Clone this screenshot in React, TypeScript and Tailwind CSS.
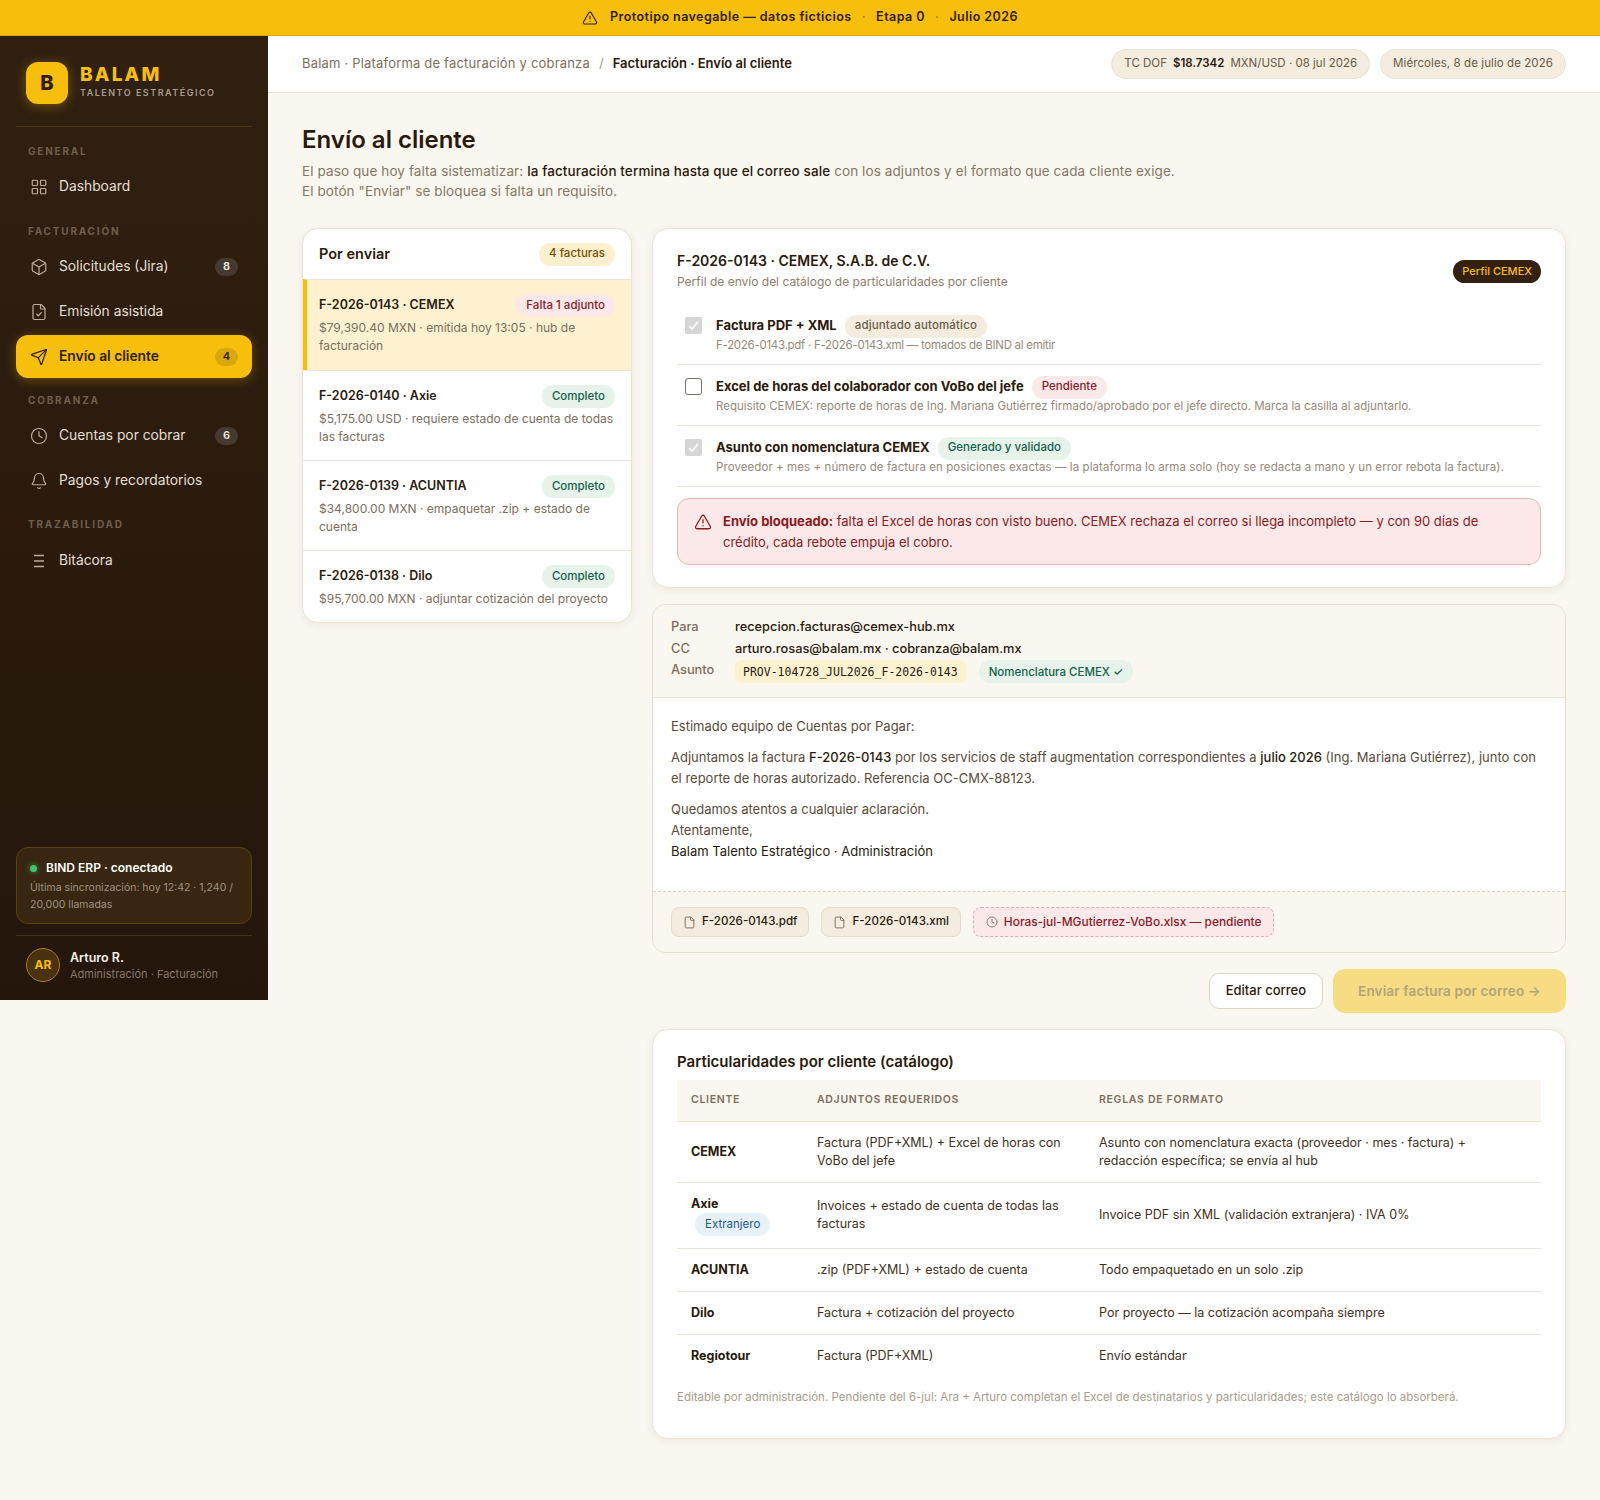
import { Bell, Box, Clock, File, FileCheck, LayoutGrid, Send, TriangleAlert } from 'lucide-react';

const sans = "font-['Inter','Liberation_Sans',sans-serif]";

const toneClass = {
  amber: 'bg-[#fdf0cf] text-[#7a4a00]',
  red: 'bg-[#fbe8e8] text-[#8b1a2a]',
  green: 'bg-[#e6f2ea] text-[#14624a]',
  blue: 'bg-[#e6f1f8] text-[#1f5a8c]',
  neutral: 'bg-[#f3ecdf] text-[#6b5b47]',
};

type Tone = keyof typeof toneClass;

const Badge = ({ tone, children, className = '' }: { tone: Tone; children: React.ReactNode; className?: string }) => (
  <span className={`inline-flex h-[23px] items-center whitespace-nowrap rounded-full px-[10px] text-[11.5px] font-medium ${toneClass[tone]} ${className}`}>
    {children}
  </span>
);

const NavLabel = ({ children }: { children: React.ReactNode }) => (
  <div className="px-3 pb-[5px] text-[10px] font-bold uppercase leading-[15px] tracking-[1.8px] text-[#6f5f4c]">{children}</div>
);

const NavItem = ({ icon, label, count, active }: { icon: React.ReactNode; label: string; count?: number; active?: boolean }) => (
  <div
    className={`flex items-center gap-[11px] rounded-[12px] px-[14px] text-[13.8px] ${
      active
        ? 'my-px h-[43px] bg-[#f7bf0c] font-semibold text-[#2f1e10] shadow-[0_2px_12px_rgba(247,191,12,0.3)]'
        : 'h-[45px] text-[#e6dfd2]'
    }`}
  >
    <span className={`flex w-[18px] justify-center ${active ? 'text-[#2f1e10]' : 'text-[#b9ad9c]'}`}>{icon}</span>
    <span className="flex-1 whitespace-nowrap">{label}</span>
    {count !== undefined && (
      <span
        className={`flex h-[18px] w-[23px] items-center justify-center rounded-full text-[11px] font-semibold ${
          active ? 'bg-[#d9a80c] text-[#3a2610]' : 'bg-[#463a30] text-[#f0eadf]'
        }`}
      >
        {count}
      </span>
    )}
  </div>
);

const Sidebar = () => (
  <aside className="flex h-[964px] w-[268px] shrink-0 flex-col bg-gradient-to-b from-[#302010] to-[#24160b] px-4 pt-[26px]">
    <div className="flex items-center gap-3 border-b border-[#4a3510] pb-[22px] pl-[10px]">
      <div className="flex h-[42px] w-[42px] items-center justify-center rounded-[12px] bg-[#f7bf0c] text-[20px] font-extrabold text-[#2f1e10] shadow-[0_2px_12px_rgba(247,191,12,0.35)]">
        B
      </div>
      <div className="mb-[2px]">
        <div className="text-[19px] font-extrabold leading-[22px] tracking-[2.2px] text-[#f7bf0c]">BALAM</div>
        <div className="whitespace-nowrap text-[9px] font-semibold leading-[14px] tracking-[1.5px] text-[#a89c8b]">TALENTO ESTRATÉGICO</div>
      </div>
    </div>
    <div className="mt-[17px] flex-1">
      <NavLabel>General</NavLabel>
      <NavItem icon={<LayoutGrid size={18} strokeWidth={1.6} />} label="Dashboard" />
      <div className="mt-[15px]" />
      <NavLabel>Facturación</NavLabel>
      <NavItem icon={<Box size={18} strokeWidth={1.6} />} label="Solicitudes (Jira)" count={8} />
      <NavItem icon={<FileCheck size={18} strokeWidth={1.6} />} label="Emisión asistida" />
      <NavItem icon={<Send size={18} strokeWidth={1.6} />} label="Envío al cliente" count={4} active />
      <div className="mt-[15px]" />
      <NavLabel>Cobranza</NavLabel>
      <NavItem icon={<Clock size={18} strokeWidth={1.6} />} label="Cuentas por cobrar" count={6} />
      <NavItem icon={<Bell size={18} strokeWidth={1.6} />} label="Pagos y recordatorios" />
      <div className="mt-[14px]" />
      <NavLabel>Trazabilidad</NavLabel>
      <div className="pt-px">
        <NavItem
          icon={
            <svg width="12" height="14" viewBox="0 0 12 14" fill="none" stroke="currentColor" strokeWidth="1.3">
              <path d="M1 1.5h10M1 7h10M1 12.5h10" />
            </svg>
          }
          label="Bitácora"
        />
      </div>
    </div>
    <div className="rounded-[12px] border border-[#5a4210] bg-[#382610] px-[13px] pb-[10px] pt-[11px]">
      <div className="flex items-center gap-[9px] text-[12px] font-semibold leading-[18px] text-white">
        <span className="h-[7px] w-[7px] rounded-full bg-[#3ec46d] shadow-[0_0_6px_rgba(62,196,109,0.7)]" />
        BIND ERP · conectado
      </div>
      <div className="mt-[2px] text-[10.5px] leading-[17px] text-[#a09381]">Última sincronización: hoy 12:42 · 1,240 / 20,000 llamadas</div>
    </div>
    <div className="mt-[11px] flex items-center gap-[10px] border-t border-[#43321d] pb-[18px] pl-[10px] pt-[12px]">
      <div className="flex h-[34px] w-[34px] items-center justify-center rounded-full border border-[#a97c14] bg-[#4a3210] text-[12px] font-bold text-[#f7bf0c]">
        AR
      </div>
      <div>
        <div className="text-[12.5px] font-semibold leading-[17px] text-[#f5efe4]">Arturo R.</div>
        <div className="text-[11px] leading-[16px] text-[#857765]">Administración · Facturación</div>
      </div>
    </div>
  </aside>
);

const invoices: { title: string; detail: string; badge: string; tone: Tone; selected?: boolean }[] = [
  { title: 'F-2026-0143 · CEMEX', detail: '$79,390.40 MXN · emitida hoy 13:05 · hub de facturación', badge: 'Falta 1 adjunto', tone: 'red', selected: true },
  { title: 'F-2026-0140 · Axie', detail: '$5,175.00 USD · requiere estado de cuenta de todas las facturas', badge: 'Completo', tone: 'green' },
  { title: 'F-2026-0139 · ACUNTIA', detail: '$34,800.00 MXN · empaquetar .zip + estado de cuenta', badge: 'Completo', tone: 'green' },
  { title: 'F-2026-0138 · Dilo', detail: '$95,700.00 MXN · adjuntar cotización del proyecto', badge: 'Completo', tone: 'green' },
];

const InvoiceList = () => (
  <div className="overflow-hidden rounded-[16px] border border-[#ebe4d6] bg-white shadow-[0_2px_8px_rgba(60,40,10,0.07)]">
    <div className="flex h-[50px] items-center justify-between px-4">
      <span className="text-[14.5px] font-semibold text-[#2a1a0c]">Por enviar</span>
      <Badge tone="amber">4 facturas</Badge>
    </div>
    {invoices.map((inv) => (
      <div
        key={inv.title}
        className={`border-t border-[#ebe4d6] pt-[14px] pr-4 ${inv.selected ? 'border-l-4 border-l-[#f7bf0c] bg-[#fdf1d0] pb-[15px] pl-3' : 'pb-[14px] pl-4'}`}
      >
        <div className="flex items-center justify-between">
          <span className="text-[12.5px] font-semibold text-[#2a1a0c]">{inv.title}</span>
          <Badge tone={inv.tone}>{inv.badge}</Badge>
        </div>
        <div className="mt-[2px] text-[12px] leading-[18px] text-[#7d6e5c]">{inv.detail}</div>
      </div>
    ))}
  </div>
);

const Check = ({ checked }: { checked?: boolean }) =>
  checked ? (
    <span className="mt-[3px] flex h-[17px] w-[17px] shrink-0 items-center justify-center rounded-[2px] bg-[#d5d5d5]">
      <svg width="13" height="13" viewBox="0 0 13 13" fill="none" stroke="#f4f4f4" strokeWidth="2">
        <path d="M2 7l3 3 6-7" />
      </svg>
    </span>
  ) : (
    <span className="mt-[3px] h-[17px] w-[17px] shrink-0 rounded-[3px] border border-[#77716a] bg-white" />
  );

const Requirement = ({ checked, title, badge, detail, detailClass = '' }: { checked?: boolean; title: string; badge: React.ReactNode; detail: string; detailClass?: string }) => (
  <div className="flex gap-[14px] border-b border-[#ebe4d6] pb-[10px] pl-2 pt-[10px]">
    <Check checked={checked} />
    <div>
      <div className="flex h-[24px] items-center gap-2">
        <span className="whitespace-nowrap text-[13px] font-bold text-[#2a1a0c]">{title}</span>
        {badge}
      </div>
      <div className={`-mt-[2px] whitespace-nowrap text-[11.5px] leading-[18px] text-[#96897a] ${detailClass}`}>{detail}</div>
    </div>
  </div>
);

const RequirementsCard = () => (
  <div className="rounded-[16px] border border-[#ebe4d6] bg-white px-6 pb-[22px] pt-[21px] shadow-[0_2px_8px_rgba(60,40,10,0.07)]">
    <div className="flex items-center justify-between">
      <div>
        <div className="text-[14px] font-semibold leading-[22px] text-[#2a1a0c]">F-2026-0143 · CEMEX, S.A.B. de C.V.</div>
        <div className="text-[12px] leading-[20px] text-[#8b7e6e]">Perfil de envío del catálogo de particularidades por cliente</div>
      </div>
      <span className="rounded-full bg-[#33200e] px-[9px] py-[3px] text-[11px] font-medium leading-[17px] text-[#f7bf0c]">Perfil CEMEX</span>
    </div>
    <div className="mt-[12px]">
      <Requirement
        checked
        title="Factura PDF + XML"
        badge={<Badge tone="neutral" className="tracking-[0.15px]">adjuntado automático</Badge>}
        detail="F-2026-0143.pdf · F-2026-0143.xml — tomados de BIND al emitir"
        detailClass="tracking-[-0.28px]"
      />
      <Requirement
        title="Excel de horas del colaborador con VoBo del jefe"
        badge={<Badge tone="red">Pendiente</Badge>}
        detail="Requisito CEMEX: reporte de horas de Ing. Mariana Gutiérrez firmado/aprobado por el jefe directo. Marca la casilla al adjuntarlo."
      />
      <Requirement
        checked
        title="Asunto con nomenclatura CEMEX"
        badge={<Badge tone="green">Generado y validado</Badge>}
        detail="Proveedor + mes + número de factura en posiciones exactas — la plataforma lo arma solo (hoy se redacta a mano y un error rebota la factura)."
        detailClass="tracking-[0.08px]"
      />
    </div>
    <div className="mt-[11px] flex gap-[11px] rounded-[12px] border border-[#e8b4b4] bg-[#fbe8e8] px-4 py-[11.5px] text-[13px] leading-[21px] text-[#8b1a1f]">
      <TriangleAlert size={18} strokeWidth={1.7} className="mt-[2px] shrink-0" />
      <p>
        <b className="font-bold">Envío bloqueado:</b> falta el Excel de horas con visto bueno. CEMEX rechaza el correo si llega incompleto — y con 90 días de crédito, cada rebote empuja el cobro.
      </p>
    </div>
  </div>
);

const Chip = ({ name }: { name: string }) => (
  <span className="flex h-[30px] items-center gap-[6px] rounded-[8px] border border-[#e5dccb] bg-[#f3ecdf] px-[11px] text-[11.6px] font-medium text-[#2a1a0c]">
    <File size={13} strokeWidth={1.5} className="text-[#6b5b47]" />
    {name}
  </span>
);

const EmailCard = () => (
  <div className="overflow-hidden rounded-[14px] border border-[#e5dccb] bg-white">
    <div className="border-b border-[#ebe4d6] bg-[#faf7f0] px-[18px] pb-[14px] pt-[11px] text-[12.8px] leading-[22px]">
      <div className="flex">
        <span className="w-[64px] font-medium text-[#7d6e5c]">Para</span>
        <span className="font-medium text-[#2a1a0c]">recepcion.facturas@cemex-hub.mx</span>
      </div>
      <div className="flex">
        <span className="w-[64px] font-medium text-[#7d6e5c]">CC</span>
        <span className="font-medium text-[#2a1a0c]">arturo.rosas@balam.mx · cobranza@balam.mx</span>
      </div>
      <div className="flex items-center">
        <span className="-mt-[3px] w-[64px] font-medium text-[#7d6e5c]">Asunto</span>
        <span className="flex h-[23px] items-center rounded-[6px] bg-[#fdf1d0] px-[8px] font-[monospace] text-[11.5px] text-[#2a1a0c]">
          PROV-104728_JUL2026_F-2026-0143
        </span>
        <Badge tone="green" className="ml-[13px] text-[11.2px]">Nomenclatura CEMEX ✓</Badge>
      </div>
    </div>
    <div className="border-b border-dashed border-[#dcd2bf] px-[18px] pb-[29px] pt-[18px] text-[13px] leading-[21px] text-[#5a4b3a]">
      <p>Estimado equipo de Cuentas por Pagar:</p>
      <p className="mt-[10px]">
        Adjuntamos la factura <b className="font-medium text-[#2a1a0c]">F-2026-0143</b> por los servicios de staff augmentation correspondientes a <b className="font-medium text-[#2a1a0c]">julio 2026</b> (Ing. Mariana Gutiérrez), junto con el reporte de horas autorizado. Referencia OC-CMX-88123.
      </p>
      <p className="mt-[10px]">Quedamos atentos a cualquier aclaración.</p>
      <p>Atentamente,</p>
      <p className="text-[#2a1a0c]">Balam Talento Estratégico · Administración</p>
    </div>
    <div className="flex gap-3 bg-[#faf7f0] px-[18px] pb-[15px] pt-[15px]">
      <Chip name="F-2026-0143.pdf" />
      <Chip name="F-2026-0143.xml" />
      <span className="flex h-[30px] items-center gap-[6px] rounded-[8px] border border-dashed border-[#e5a9b0] bg-[#fbe8e8] px-[12px] text-[11.9px] font-medium text-[#8b1a2a]">
        <Clock size={12} strokeWidth={1.5} className="text-[#7a5a55]" />
        Horas-jul-MGutierrez-VoBo.xlsx — pendiente
      </span>
    </div>
  </div>
);

const catalog: { client: string; tag?: string; files: string; rules: string }[] = [
  { client: 'CEMEX', files: 'Factura (PDF+XML) + Excel de horas con VoBo del jefe', rules: 'Asunto con nomenclatura exacta (proveedor · mes · factura) + redacción específica; se envía al hub' },
  { client: 'Axie', tag: 'Extranjero', files: 'Invoices + estado de cuenta de todas las facturas', rules: 'Invoice PDF sin XML (validación extranjera) · IVA 0%' },
  { client: 'ACUNTIA', files: '.zip (PDF+XML) + estado de cuenta', rules: 'Todo empaquetado en un solo .zip' },
  { client: 'Dilo', files: 'Factura + cotización del proyecto', rules: 'Por proyecto — la cotización acompaña siempre' },
  { client: 'Regiotour', files: 'Factura (PDF+XML)', rules: 'Envío estándar' },
];

const CatalogCard = () => (
  <div className="rounded-[16px] border border-[#ebe4d6] bg-white px-6 pb-[32px] pt-[20px] shadow-[0_2px_8px_rgba(60,40,10,0.07)]">
    <h2 className="text-[15px] font-semibold leading-[24px] text-[#2a1a0c]">Particularidades por cliente (catálogo)</h2>
    <table className="mt-[6px] w-full table-fixed border-collapse text-left">
      <colgroup>
        <col className="w-[126px]" />
        <col className="w-[282px]" />
        <col />
      </colgroup>
      <thead>
        <tr className="h-[41px] border-b border-[#ebe4d6] bg-[#faf7f0] text-[10.5px] font-semibold tracking-[0.7px] text-[#7d6e5c]">
          <th className="px-[14px] font-semibold">CLIENTE</th>
          <th className="px-[14px] font-semibold">ADJUNTOS REQUERIDOS</th>
          <th className="px-[14px] font-semibold">REGLAS DE FORMATO</th>
        </tr>
      </thead>
      <tbody className="text-[12.5px] leading-[18px] text-[#3f3122]">
        {catalog.map((row) => (
          <tr key={row.client} className="border-b border-[#ebe4d6] last:border-b-0">
            <td className="px-[14px] py-[12px] font-bold text-[#2a1a0c]">
              {row.client}
              {row.tag && (
                <div>
                  <Badge tone="blue" className="ml-[4px] font-normal">{row.tag}</Badge>
                </div>
              )}
            </td>
            <td className="px-[14px] py-[12px]">{row.files}</td>
            <td className="px-[14px] py-[12px]">{row.rules}</td>
          </tr>
        ))}
      </tbody>
    </table>
    <p className="mt-[11px] text-[11.5px] leading-[18px] text-[#a89c8b]">
      Editable por administración. Pendiente del 6-jul: Ara + Arturo completan el Excel de destinatarios y particularidades; este catálogo lo absorberá.
    </p>
  </div>
);

export default function App() {
  return (
    <div className={`min-h-screen bg-[#faf7f0] ${sans}`}>
      <div className="flex h-[36px] items-center justify-center gap-[10px] border-b border-[#d8a50a] bg-[#f7bf0c] text-[12.5px] font-semibold tracking-[0.45px] text-[#33200e]">
        <TriangleAlert size={16} strokeWidth={1.7} />
        <span className="ml-[2px]">Prototipo navegable — datos ficticios</span>
        <span className="text-[#a9840c]">·</span>
        <span>Etapa 0</span>
        <span className="text-[#a9840c]">·</span>
        <span>Julio 2026</span>
      </div>
      <div className="flex items-start">
        <Sidebar />
        <div className="min-w-0 flex-1">
          <header className="flex h-[57px] items-center justify-between border-b border-[#e9e1d1] bg-white pl-[34px] pr-[34px]">
            <div className="flex items-center text-[13px]">
              <span className="tracking-[0.19px] text-[#7d6e5c]">Balam · Plataforma de facturación y cobranza</span>
              <span className="mx-[9px] text-[#a89c8b]">/</span>
              <span className="font-semibold text-[#2a1a0c]">Facturación · Envío al cliente</span>
            </div>
            <div className="flex items-center gap-[10px] text-[11.5px] text-[#6b5b47]">
              <span className="flex h-[30px] items-center gap-[6px] rounded-full border border-[#e9e1d1] bg-[#f3ecdf] px-3">
                TC DOF <b className="font-semibold text-[#2a1a0c]">$18.7342</b> MXN/USD · 08 jul 2026
              </span>
              <span className="flex h-[30px] items-center rounded-full border border-[#e9e1d1] bg-[#f3ecdf] px-3 tracking-[0.08px]">Miércoles, 8 de julio de 2026</span>
            </div>
          </header>
          <main className="px-[34px] pb-[60px] pt-[30px]">
            <h1 className="text-[24px] font-semibold leading-[34px] text-[#2a1a0c]">Envío al cliente</h1>
            <p className="mt-[4px] text-[13.5px] leading-[20px] tracking-[0.1px] text-[#857765]">
              El paso que hoy falta sistematizar: <b className="font-medium text-[#2a1a0c]">la facturación termina hasta que el correo sale</b> con los adjuntos y el formato que cada cliente exige.
              <br />
              El botón "Enviar" se bloquea si falta un requisito.
            </p>
            <div className="mt-[27px] grid grid-cols-[330px_1fr] items-start gap-5">
              <InvoiceList />
              <div className="flex min-w-0 flex-col">
                <RequirementsCard />
                <div className="mt-4">
                  <EmailCard />
                </div>
                <div className="mt-4 flex items-center justify-end gap-[10px]">
                  <button className="h-[36px] rounded-[10px] border border-[#e0d6c2] bg-white px-4 text-[13px] font-medium text-[#2a1a0c]">Editar correo</button>
                  <button className="h-[44px] w-[233px] rounded-[12px] bg-[#f7dc84] text-[13.5px] font-semibold tracking-[0.15px] text-[#b3a477]">Enviar factura por correo →</button>
                </div>
                <div className="mt-4">
                  <CatalogCard />
                </div>
              </div>
            </div>
          </main>
        </div>
      </div>
    </div>
  );
}
